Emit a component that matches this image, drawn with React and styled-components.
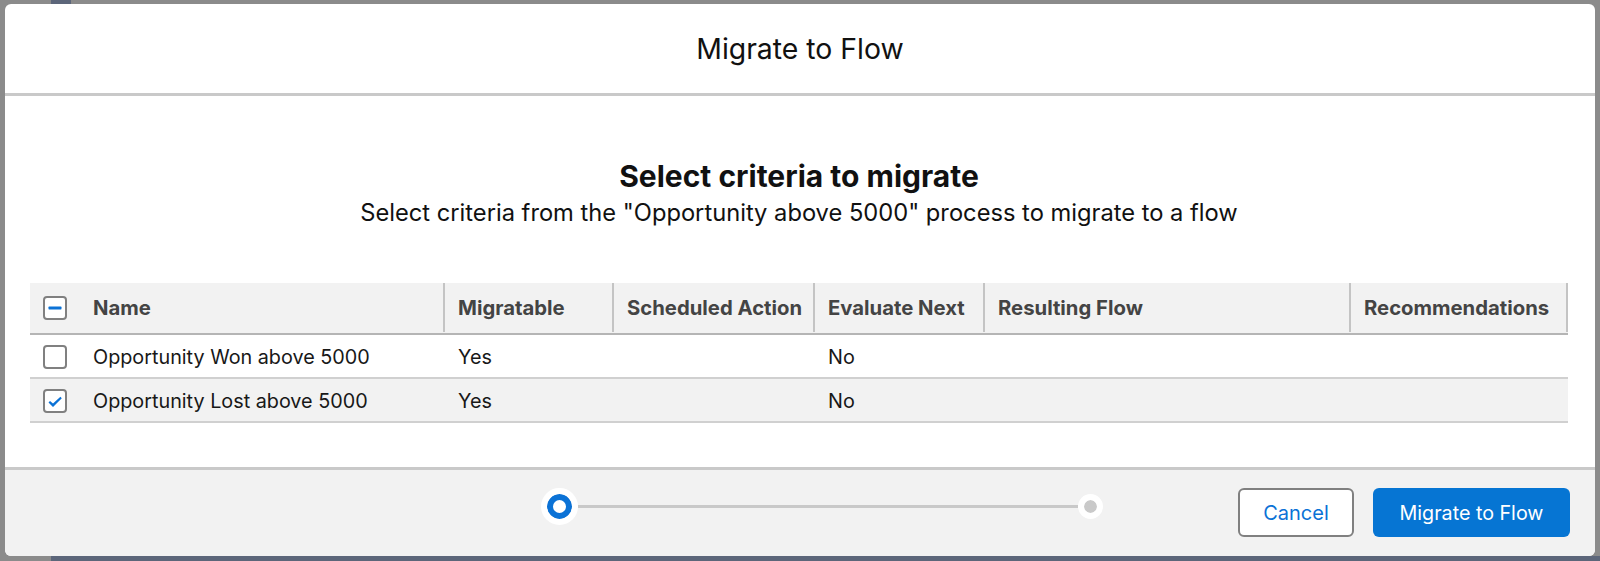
import React from "react";
import styled, { createGlobalStyle } from "styled-components";

const columns = [
  { label: "Name", width: 415 },
  { label: "Migratable", width: 169 },
  { label: "Scheduled Action", width: 201 },
  { label: "Evaluate Next", width: 170 },
  { label: "Resulting Flow", width: 366 },
  { label: "Recommendations", width: 217 },
];

const rows = [
  { name: "Opportunity Won above 5000", migratable: "Yes", next: "No", checked: false },
  { name: "Opportunity Lost above 5000", migratable: "Yes", next: "No", checked: true },
];

export default function App() {
  return (
    <>
      <GlobalStyle />
      <Backdrop>
        <Modal>
          <Header>Migrate to Flow</Header>
          <Body>
            <Intro>
              <Heading>Select criteria to migrate</Heading>
              <Subheading>
                Select criteria from the "Opportunity above 5000" process to migrate to a flow
              </Subheading>
            </Intro>
            <Table>
              <HeadRow>
                {columns.map((col, i) => (
                  <HeadCell key={col.label}>
                    {i === 0 && (
                      <CheckBox>
                        <svg width="14" height="14" viewBox="0 0 14 14">
                          <rect x="0.5" y="5.6" width="13" height="2.8" rx="0.6" fill="#0b72d6" />
                        </svg>
                      </CheckBox>
                    )}
                    {col.label}
                  </HeadCell>
                ))}
              </HeadRow>
              {rows.map((row) => (
                <Row key={row.name} $shaded={row.checked}>
                  <Cell>
                    <CheckBox>
                      {row.checked && (
                        <svg width="16" height="16" viewBox="0 0 16 16">
                          <path
                            d="M1.5 9.5 L3 8 L6 10.6 L13.4 3.8 L14.8 5.2 L6 14 Z"
                            fill="#0b72d6"
                          />
                        </svg>
                      )}
                    </CheckBox>
                    {row.name}
                  </Cell>
                  <Cell>{row.migratable}</Cell>
                  <Cell />
                  <Cell>{row.next}</Cell>
                  <Cell />
                  <Cell />
                </Row>
              ))}
            </Table>
          </Body>
          <Footer>
            <Progress>
              <CurrentStep />
              <Track />
              <NextStep />
            </Progress>
            <Actions>
              <CancelButton>Cancel</CancelButton>
              <PrimaryButton>Migrate to Flow</PrimaryButton>
            </Actions>
          </Footer>
        </Modal>
      </Backdrop>
    </>
  );
}

const GlobalStyle = createGlobalStyle`
  html, body {
    margin: 0;
    padding: 0;
    font-family: Inter, "Liberation Sans", sans-serif;
  }

  * {
    box-sizing: border-box;
  }
`;

const Backdrop = styled.div`
  width: 1600px;
  height: 561px;
  padding: 4px 5px 5px 5px;
  background:
    linear-gradient(#5c667a, #5c667a) 51px 100% / 1549px 5px no-repeat,
    linear-gradient(#5c667a, #5c667a) 51px 0 / 20px 4px no-repeat,
    #8b8b8b;
  overflow: hidden;
`;

const Modal = styled.div`
  height: 552px;
  display: flex;
  flex-direction: column;
  background: #fff;
  border-radius: 6px;
  overflow: hidden;
`;

const Header = styled.header`
  height: 92px;
  flex-shrink: 0;
  display: flex;
  align-items: center;
  justify-content: center;
  border-bottom: 3px solid #c9c9c9;
  font-size: 28.4px;
  color: #111;
`;

const Body = styled.main`
  flex: 1;
  padding: 0 27px 0 25px;
`;

const Intro = styled.div`
  height: 187px;
  padding-top: 62px;
  text-align: center;
  color: #111;
`;

const Heading = styled.h2`
  margin: 0;
  font-size: 30px;
  line-height: 36px;
  font-weight: 700;
`;

const Subheading = styled.p`
  margin: 5px 0 0;
  font-size: 23.7px;
  line-height: 28px;
`;

const Table = styled.div`
  width: 1538px;
`;

const gridColumns = columns.map((col) => `${col.width}px`).join(" ");

const HeadRow = styled.div`
  display: grid;
  grid-template-columns: ${gridColumns};
  height: 52px;
  background: #f2f2f2;
  border-bottom: 2px solid #b5b5b5;
`;

const HeadCell = styled.div`
  display: flex;
  align-items: center;
  padding-left: 13px;
  height: 49px;
  border-right: 2px solid #c4c4c4;
  font-size: 20.3px;
  font-weight: 700;
  color: #444;
  white-space: nowrap;
`;

const Row = styled.div`
  display: grid;
  grid-template-columns: ${gridColumns};
  height: 44px;
  background: ${(p) => (p.$shaded ? "#f2f2f2" : "#fff")};
  border-bottom: 2px solid #d0d0d0;
`;

const Cell = styled.div`
  display: flex;
  align-items: center;
  padding: 2px 0 0 13px;
  font-size: 19.8px;
  color: #181818;
  white-space: nowrap;
`;

const CheckBox = styled.span`
  display: flex;
  align-items: center;
  justify-content: center;
  width: 24px;
  height: 24px;
  margin-right: 26px;
  flex-shrink: 0;
  background: #fff;
  border: 2px solid #808080;
  border-radius: 4px;
`;

const Footer = styled.footer`
  height: 89px;
  flex-shrink: 0;
  position: relative;
  display: flex;
  justify-content: flex-end;
  padding: 18px 25px 0 0;
  background: #f2f2f2;
  border-top: 3px solid #c9c9c9;
`;

const Progress = styled.div`
  position: absolute;
  left: 542px;
  top: 24px;
  display: flex;
  align-items: center;
`;

const CurrentStep = styled.span`
  width: 25px;
  height: 25px;
  flex-shrink: 0;
  border-radius: 50%;
  background: #fff;
  border: 6px solid #0b72d6;
  outline: 6px solid #fff;
`;

const Track = styled.span`
  width: 500px;
  margin-left: 6px;
  height: 3px;
  background: #c9c9c9;
`;

const NextStep = styled.span`
  width: 13px;
  height: 13px;
  flex-shrink: 0;
  margin-left: 6px;
  border-radius: 50%;
  background: #c9c9c9;
  outline: 6px solid #fff;
`;

const Actions = styled.div`
  display: flex;
  gap: 19px;
`;

const CancelButton = styled.button`
  width: 116px;
  height: 49px;
  background: #fff;
  border: 2px solid #808080;
  border-radius: 6px;
  font: inherit;
  font-size: 20px;
  color: #0b72d6;
`;

const PrimaryButton = styled.button`
  width: 197px;
  height: 49px;
  background: #0675d3;
  border: 0;
  border-radius: 6px;
  font: inherit;
  font-size: 19.7px;
  color: #fff;
`;
